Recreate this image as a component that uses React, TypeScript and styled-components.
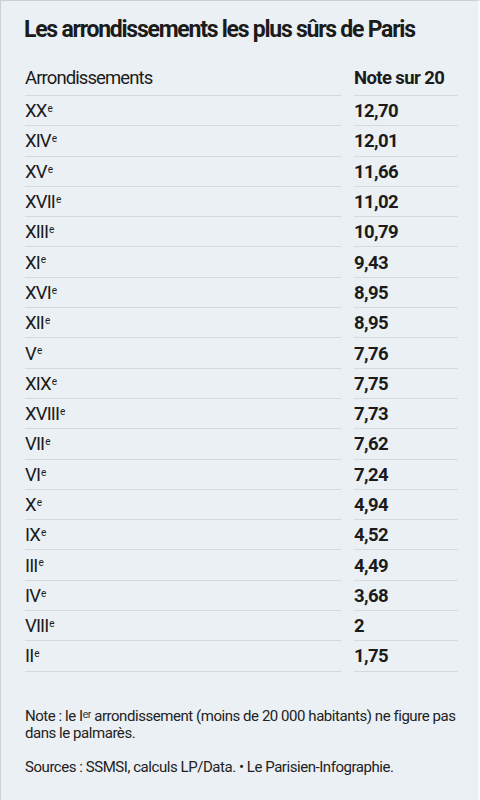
import { Fragment } from 'react';
import styled, { createGlobalStyle } from 'styled-components';

const GlobalStyle = createGlobalStyle`
  html, body {
    margin: 0;
    padding: 0;
    background: #ebf0f4;
  }
  body {
    font-family: Roboto, 'Liberation Sans', sans-serif;
    color: #1b1b1b;
  }
`;

const rows: [string, string][] = [
  ['XX', '12,70'],
  ['XIV', '12,01'],
  ['XV', '11,66'],
  ['XVII', '11,02'],
  ['XIII', '10,79'],
  ['XI', '9,43'],
  ['XVI', '8,95'],
  ['XII', '8,95'],
  ['V', '7,76'],
  ['XIX', '7,75'],
  ['XVIII', '7,73'],
  ['VII', '7,62'],
  ['VI', '7,24'],
  ['X', '4,94'],
  ['IX', '4,52'],
  ['III', '4,49'],
  ['IV', '3,68'],
  ['VIII', '2'],
  ['II', '1,75'],
];

const Page = styled.div`
  box-sizing: border-box;
  width: 480px;
  height: 800px;
  padding: 14px 20px 0 24px;
  border-top: 1px solid #c9d0d6;
  border-left: 1px solid #c9d0d6;
  border-right: 2px solid #f7f9fb;
  overflow: hidden;
`;

const Title = styled.h1`
  margin: 0 0 19px -1px;
  font-size: 23px;
  line-height: 30px;
  font-weight: 700;
  letter-spacing: -1.25px;
  white-space: nowrap;
`;

const Table = styled.div`
  display: grid;
  grid-template-columns: 1fr 104px;
  column-gap: 13px;
`;

const Cell = styled.div<{ $bold?: boolean }>`
  height: 30.3px;
  box-sizing: border-box;
  display: flex;
  align-items: center;
  border-bottom: 1.5px solid #d3d9de;
  font-size: 18.5px;
  font-weight: ${(p) => (p.$bold ? 700 : 400)};
  letter-spacing: ${(p) => (p.$bold ? '-0.6px' : '-0.9px')};
  padding-top: 1px;
`;

const HeadCell = styled(Cell)`
  height: 32px;
  padding-top: 0;
  padding-bottom: 4px;
`;

const Sup = styled.span`
  display: inline-block;
  align-self: flex-start;
  font-size: 10px;
  line-height: 10px;
  letter-spacing: 0;
  margin: 7px 0 0 1px;
`;

const Notes = styled.div`
  margin-top: 36px;
  font-size: 15px;
  line-height: 17px;
  letter-spacing: -0.45px;
  color: #222;
`;

const NoteLine = styled.p`
  margin: 0 0 17px 0;
`;

export default function App() {
  return (
    <>
      <GlobalStyle />
      <Page>
        <Title>Les arrondissements les plus sûrs de Paris</Title>
        <Table>
          <HeadCell>Arrondissements</HeadCell>
          <HeadCell $bold>Note sur 20</HeadCell>
          {rows.map(([name, score]) => (
            <Fragment key={name}>
              <Cell>
                {name}
                <Sup>e</Sup>
              </Cell>
              <Cell $bold>{score}</Cell>
            </Fragment>
          ))}
        </Table>
        <Notes>
          <NoteLine>
            Note : le Iᵉʳ arrondissement (moins de 20 000 habitants) ne figure
            pas dans le palmarès.
          </NoteLine>
          <NoteLine>
            Sources : SSMSI, calculs LP/Data. • Le Parisien-Infographie.
          </NoteLine>
        </Notes>
      </Page>
    </>
  );
}
